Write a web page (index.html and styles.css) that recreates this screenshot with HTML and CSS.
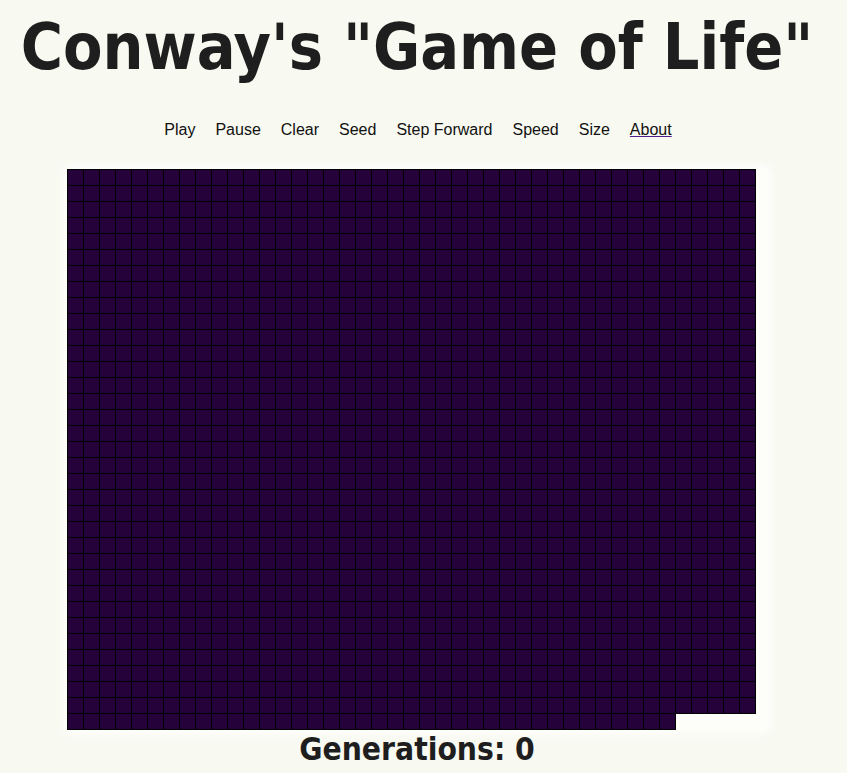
FILE: index.html
```html
<!DOCTYPE html>
<html lang="en">
<head>
<meta charset="utf-8">
<title>Conway's Game of Life</title>
<link rel="stylesheet" href="styles.css">
</head>
<body>
<div class="page">
  <h1 class="title">Conway's "Game of Life"</h1>
  <nav class="menu">
    <span class="menu-item">Play</span>
    <span class="menu-item">Pause</span>
    <span class="menu-item">Clear</span>
    <span class="menu-item">Seed</span>
    <span class="menu-item">Step Forward</span>
    <span class="menu-item">Speed</span>
    <span class="menu-item">Size</span>
    <a class="menu-item menu-link" href="#about">About</a>
  </nav>
  <div class="board" id="board"></div>
  <h2 class="generations">Generations: 0</h2>
</div>
<script src="script.js"></script>
</body>
</html>
```

FILE: styles.css
```css
html, body {
  margin: 0;
  padding: 0;
  background: #f8f9f0;
}

.page {
  width: 834px;
  display: flex;
  flex-direction: column;
  align-items: center;
}

.title {
  margin: 10px 0 0;
  font-family: "DejaVu Sans", sans-serif;
  font-stretch: condensed;
  font-weight: bold;
  font-size: 64px;
  line-height: 74px;
  color: #1e1e1e;
}

.menu {
  margin: 37px 0 0 2px;
  display: flex;
  font-family: "Liberation Sans", Arial, sans-serif;
  font-size: 16px;
  line-height: 18px;
  color: #111;
}

.menu-item {
  padding: 0 10px;
  color: #111;
}

.menu-link {
  text-decoration: underline;
  text-decoration-color: #551a8b;
}

.board {
  margin-top: 30px;
  width: 700px;
  height: 561px;
  display: flex;
  flex-wrap: wrap;
  align-content: flex-start;
  background: #fdfdf9;
  box-shadow: 0 0 10px 3px #ffffff;
}

.cell {
  width: 15px;
  height: 15px;
  border: 1px solid #000;
  margin: 0 -1px -1px 0;
  background: #25033a;
  flex: none;
}

.generations {
  margin: 1px 0 0;
  font-family: "DejaVu Sans", sans-serif;
  font-stretch: condensed;
  font-weight: bold;
  font-size: 31.5px;
  line-height: 36px;
  color: #1e1e1e;
}
```

FILE: script.js
```js
var board = document.getElementById('board');
for (var i = 0; i < 1500; i++) {
  var c = document.createElement('div');
  c.className = 'cell';
  board.appendChild(c);
}
```
